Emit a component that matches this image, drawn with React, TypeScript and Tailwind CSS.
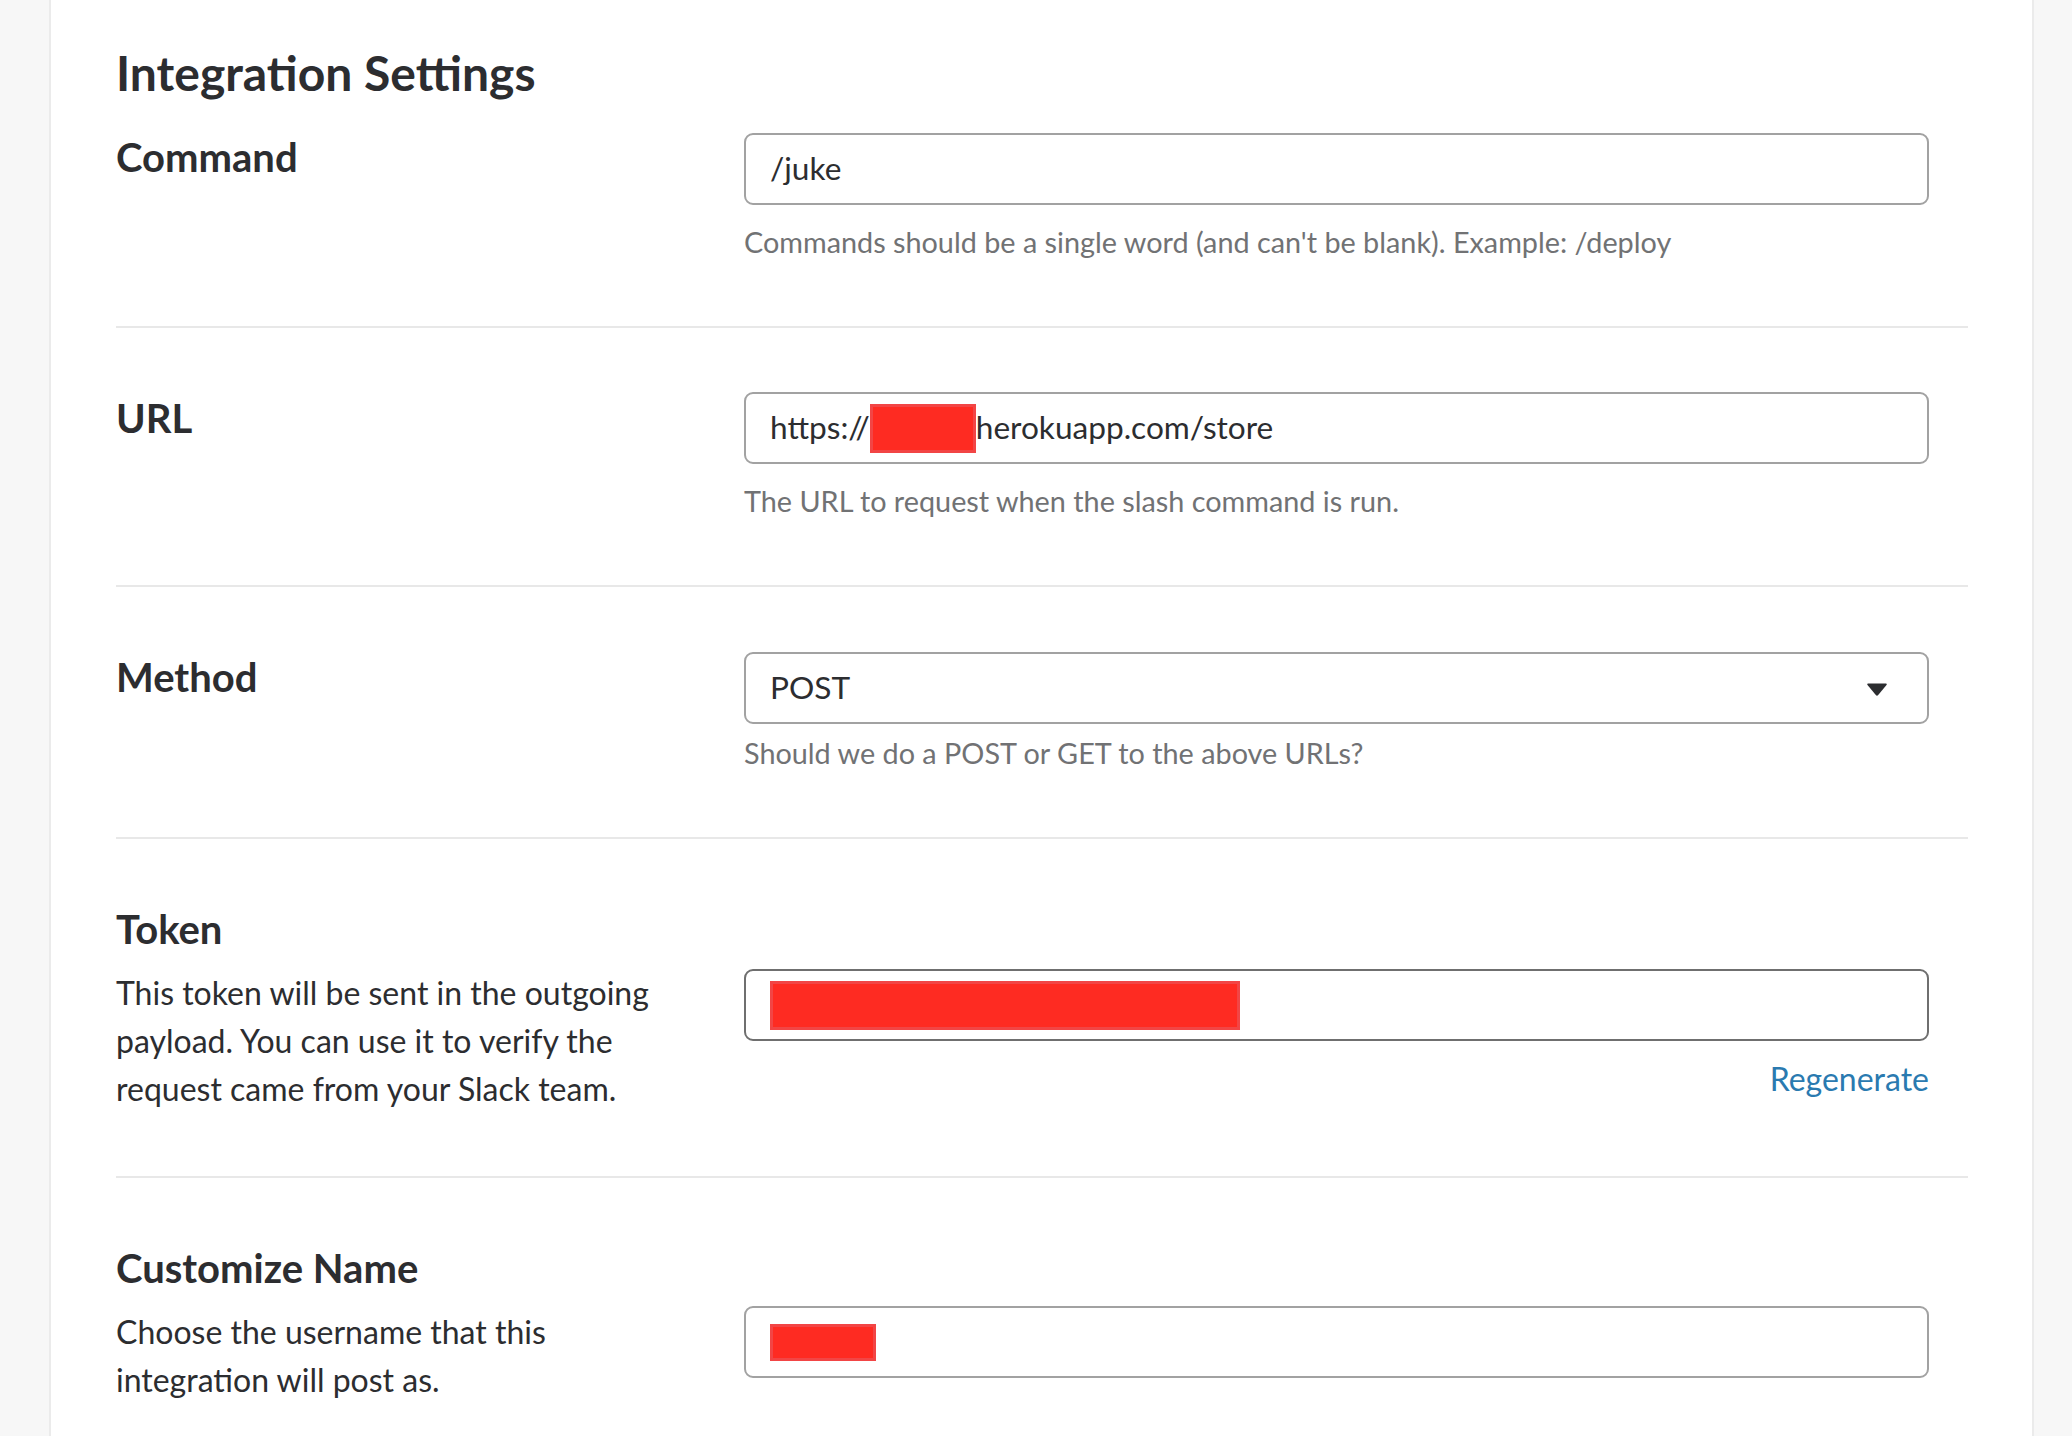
import React from "react";

const font = { fontFamily: "Lato, 'Noto Sans', sans-serif" };

function Redact({ w, h, className = "" }: { w: string; h: string; className?: string }) {
  return <span className={`inline-block shrink-0 bg-[#fe2b22] border-[3px] border-[#f24545] ${w} ${h} ${className}`} />;
}

function Label({ children }: { children: React.ReactNode }) {
  return <div className="text-[40px] leading-[52px] font-bold text-[#2c2d30]">{children}</div>;
}

function Help({ children, className = "" }: { children: React.ReactNode; className?: string }) {
  return <div className={`text-[28.8px] leading-[36px] text-[#717274] ${className}`}>{children}</div>;
}

function Desc({ children }: { children: React.ReactNode }) {
  return <div className="mt-[14px] text-[32px] leading-[48px] text-[#2c2d30] w-[560px]">{children}</div>;
}

function Input({ children, dark = false }: { children?: React.ReactNode; dark?: boolean }) {
  return (
    <div
      className={`h-[72px] w-full rounded-[9px] border-2 ${dark ? "border-[#6f6f6f]" : "border-[#a2a2a2]"} bg-white flex items-center pl-[24px] pr-[30px] text-[31.6px] text-[#2c2d30]`}
    >
      {children}
    </div>
  );
}

export default function App() {
  return (
    <div className="w-[2072px] h-[1436px] overflow-hidden flex bg-[#f7f7f7]" style={font}>
      <div className="w-[51px] shrink-0 border-r-2 border-[#ebebeb] bg-[#f7f7f7]" />
      <div className="w-[1981px] shrink-0 bg-white pl-[65px] pr-[64px] pt-[45px]">
        <h1 className="text-[48px] leading-[56px] font-bold text-[#2c2d30]">Integration Settings</h1>

        {/* Command */}
        <div className="mt-[30px] grid grid-cols-[628px_1185px] pb-[66px] border-b-2 border-[#e8e8e8]">
          <Label>Command</Label>
          <div className="pt-[2px]">
            <Input>/juke</Input>
            <Help className="mt-[19px]">Commands should be a single word (and can't be blank). Example: /deploy</Help>
          </div>
        </div>

        {/* URL */}
        <div className="grid grid-cols-[628px_1185px] pt-[64px] pb-[66px] border-b-2 border-[#e8e8e8]">
          <Label>URL</Label>
          <div>
            <Input>
              <span>https://</span>
              <Redact w="w-[106px]" h="h-[49px]" />
              <span>herokuapp.com/store</span>
            </Input>
            <Help className="mt-[19px]">The URL to request when the slash command is run.</Help>
          </div>
        </div>

        {/* Method */}
        <div className="grid grid-cols-[628px_1185px] pt-[64px] pb-[66px] border-b-2 border-[#e8e8e8]">
          <Label>Method</Label>
          <div className="pt-[1px]">
            <Input>
              <span className="flex-1">POST</span>
              <svg width="22" height="15" viewBox="0 0 22 15" className="mr-[9px] mt-[2px]">
                <path d="M2 1.5 H20 Q21.5 1.5 20.5 3 L12.2 13 Q11 14.3 9.8 13 L1.5 3 Q0.5 1.5 2 1.5 Z" fill="#2c2d30" />
              </svg>
            </Input>
            <Help className="mt-[11px]">Should we do a POST or GET to the above URLs?</Help>
          </div>
        </div>

        {/* Token */}
        <div className="grid grid-cols-[628px_1185px] pt-[64px] pb-[63px] border-b-2 border-[#e8e8e8]">
          <div>
            <Label>Token</Label>
            <Desc>This token will be sent in the outgoing payload. You can use it to verify the request came from your Slack team.</Desc>
          </div>
          <div className="pt-[66px]">
            <Input dark>
              <Redact w="w-[470px]" h="h-[49px]" />
            </Input>
            <div className="mt-[20px] flex justify-end">
              <span className="text-[32px] leading-[36px] text-[#2a7ab0]">Regenerate</span>
            </div>
          </div>
        </div>

        {/* Customize Name */}
        <div className="grid grid-cols-[628px_1185px] pt-[64px]">
          <div>
            <Label>Customize Name</Label>
            <Desc>Choose the username that this integration will post as.</Desc>
          </div>
          <div className="pt-[64px]">
            <Input>
              <Redact w="w-[106px]" h="h-[37px]" />
            </Input>
          </div>
        </div>
      </div>
      <div className="flex-1 border-l-2 border-[#ebebeb] bg-[#f7f7f7]" />
    </div>
  );
}
